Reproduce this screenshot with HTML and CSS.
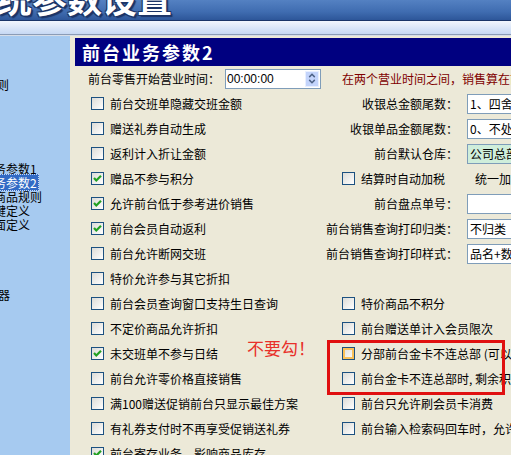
FILE: index.html
```html
<!DOCTYPE html>
<html>
<head>
    <meta charset="utf-8">
    <title>系统参数设置</title>
    <link rel="stylesheet" href="styles.css">
</head>
<body>
    <div class="titlebar"><span class="title-text">系统参数设置</span></div>
    <div class="toolbar"></div>

    <div class="main">
        <ul class="tree">
            <li></li><li></li><li></li>
            <li class="cut-more">则</li>
            <li></li><li></li><li></li><li></li><li></li>
            <li>务参数1</li>
            <li class="selected"><span>务参数2</span></li>
            <li>商品规则</li>
            <li>键定义</li>
            <li>面定义</li>
            <li></li><li></li><li></li><li></li>
            <li class="cut-less">器</li>
        </ul>

        <div class="panel">
            <div class="panel-head">前台业务参数2</div>

            <div class="form">
                <div class="time-row">
                    <span>前台零售开始营业时间：</span>
                    <div class="time-box">
                        <span>00:00:00</span>
                        <span class="spin">
                            <svg width="13" height="15" viewBox="0 0 13 15">
                                <polyline points="3.5,6 6.5,3 9.5,6" fill="none" stroke="#4d6185" stroke-width="1.6"/>
                                <polyline points="3.5,9 6.5,12 9.5,9" fill="none" stroke="#4d6185" stroke-width="1.6"/>
                            </svg>
                        </span>
                    </div>
                    <span class="hint">在两个营业时间之间，销售算在前一天</span>
                </div>

                <!-- row 1 -->
                <label class="check"><span class="cb"></span>前台交班单隐藏交班金额</label>
                <span class="field-label">收银总金额尾数：</span>
                <div class="combo">1、四舍五入</div>

                <!-- row 2 -->
                <label class="check"><span class="cb"></span>赠送礼券自动生成</label>
                <span class="field-label">收银单品金额尾数：</span>
                <div class="combo">0、不处理</div>

                <!-- row 3 -->
                <label class="check"><span class="cb"></span>返利计入折让金额</label>
                <span class="field-label">前台默认仓库：</span>
                <div class="combo green">公司总部</div>

                <!-- row 4 -->
                <label class="check"><span class="cb on"><svg width="11" height="11" viewBox="0 0 11 11"><polyline points="2,5 4.3,7.5 9,2.8" fill="none" stroke="#21a121" stroke-width="2.2"/></svg></span>赠品不参与积分</label>
                <label class="check sub"><span class="cb"></span>结算时自动加税</label>
                <span class="extra">统一加税率</span>

                <!-- row 5 -->
                <label class="check"><span class="cb on"><svg width="11" height="11" viewBox="0 0 11 11"><polyline points="2,5 4.3,7.5 9,2.8" fill="none" stroke="#21a121" stroke-width="2.2"/></svg></span>允许前台低于参考进价销售</label>
                <span class="field-label">前台盘点单号：</span>
                <div class="combo"></div>

                <!-- row 6 -->
                <label class="check"><span class="cb on"><svg width="11" height="11" viewBox="0 0 11 11"><polyline points="2,5 4.3,7.5 9,2.8" fill="none" stroke="#21a121" stroke-width="2.2"/></svg></span>前台会员自动返利</label>
                <span class="field-label">前台销售查询打印归类：</span>
                <div class="combo">不归类</div>

                <!-- row 7 -->
                <label class="check"><span class="cb"></span>前台允许断网交班</label>
                <span class="field-label">前台销售查询打印样式：</span>
                <div class="combo">品名+数量</div>

                <!-- row 8 -->
                <label class="check"><span class="cb"></span>特价允许参与其它折扣</label>
                <span class="wide"></span>

                <!-- row 9 -->
                <label class="check"><span class="cb"></span>前台会员查询窗口支持生日查询</label>
                <label class="check wide"><span class="cb"></span>特价商品不积分</label>

                <!-- row 10 -->
                <label class="check"><span class="cb"></span>不定价商品允许折扣</label>
                <label class="check wide"><span class="cb"></span>前台赠送单计入会员限次</label>

                <!-- row 11 -->
                <label class="check"><span class="cb on"><svg width="11" height="11" viewBox="0 0 11 11"><polyline points="2,5 4.3,7.5 9,2.8" fill="none" stroke="#21a121" stroke-width="2.2"/></svg></span>未交班单不参与日结</label>
                <label class="check wide"><span class="cb hot"></span>分部前台金卡不连总部 (可以使用金卡)</label>

                <!-- row 12 -->
                <label class="check"><span class="cb"></span>前台允许零价格直接销售</label>
                <label class="check wide"><span class="cb"></span>前台金卡不连总部时, 剩余积分</label>

                <!-- row 13 -->
                <label class="check"><span class="cb"></span>满100赠送促销前台只显示最佳方案</label>
                <label class="check wide"><span class="cb"></span>前台只允许刷会员卡消费</label>

                <!-- row 14 -->
                <label class="check"><span class="cb"></span>有礼券支付时不再享受促销送礼券</label>
                <label class="check wide"><span class="cb"></span>前台输入检索码回车时，允许</label>

                <!-- row 15 -->
                <label class="check"><span class="cb on"><svg width="11" height="11" viewBox="0 0 11 11"><polyline points="2,5 4.3,7.5 9,2.8" fill="none" stroke="#21a121" stroke-width="2.2"/></svg></span>前台寄存业务，影响商品库存</label>
                <span class="wide"></span>
            </div>

            <!-- annotation drawn over the form -->
            <div class="note">不要勾！</div>
            <div class="mark"></div>
        </div>
    </div>
</body>
</html>
```

FILE: styles.css
```css
html, body { margin: 0; padding: 0; }
body { width: 511px; height: 455px; overflow: hidden; font-family: "Noto Sans CJK SC", "Liberation Sans", sans-serif; font-size: 12px; color: #000; background: #ece9d8; }

.titlebar { height: 20px; overflow: hidden; background: linear-gradient(#5481c2, #3f6cb0 60%, #2d5699); border-bottom: 1px solid #1b3567; }
.title-text { display: block; margin: -20px 0 0 -38px; font-size: 35px; line-height: 35px; font-weight: bold; color: #fff; white-space: nowrap;
    text-shadow: 1px 1px 0 #1c3466, -1px -1px 0 #1c3466, 1px -1px 0 #1c3466, -1px 1px 0 #1c3466, 2px 2px 1px #1c3466; }
.toolbar { height: 13px; background: linear-gradient(#f2f6fd, #c6d8f3); border-bottom: 1px solid #8b9cb6; }

.main { display: flex; height: 420px; border-top: 1px solid #d6dde8; }
.tree { width: 70px; margin: 0; padding: 0; list-style: none; background: #a6caf0; overflow: hidden; flex-shrink: 0; }
.tree li { height: 14px; line-height: 14px; white-space: nowrap; text-indent: -6px; }
.tree li.cut-more { text-indent: -3px; }
.tree li.cut-less { text-indent: -2px; }
.tree .selected span { background: #316ac5; color: #fff; padding-right: 2px; outline: 1px dotted #c8d8f0; outline-offset: -1px; }

.panel { flex: 1; position: relative; overflow: hidden; }
.panel-head { margin: 2px 0 0 5px; height: 28px; line-height: 28px; padding-left: 7px; background: #000080; color: #fff; font-size: 18px; font-weight: bold; letter-spacing: 2px; white-space: nowrap; }

.form { display: grid; grid-template-columns: 234px 133px 200px; grid-auto-rows: 25px; padding-left: 21px; width: 567px; }
.time-row { grid-column: 1 / -1; display: flex; align-items: center; margin-left: -3px; white-space: nowrap; }
.time-box { display: flex; align-items: center; justify-content: space-between; width: 96px; height: 20px; box-sizing: border-box; margin-left: 5px; padding: 0 1px 0 1px; background: #fff; border: 1px solid #7f9db9; font-family: "Liberation Sans", sans-serif; font-size: 12px; }
.spin { display: flex; width: 14px; height: 16px; background: #c3d4fb; border: 1px solid #e8efff; box-sizing: border-box; align-items: center; justify-content: center; }
.hint { margin-left: 21px; color: #800000; }

.check { display: flex; align-items: center; gap: 6px; white-space: nowrap; }
.check.sub { padding-left: 17px; }
.wide { grid-column: 2 / 4; padding-left: 17px; }
.cb { display: flex; align-items: center; justify-content: center; width: 13px; height: 13px; box-sizing: border-box; flex-shrink: 0; border: 1px solid #1c5180; background: linear-gradient(135deg, #dcdcd7, #fff); }
.cb.hot { box-shadow: inset 0 0 0 2px #f9c15a; }

.field-label { align-self: center; text-align: right; white-space: nowrap; }
.combo { align-self: center; margin-left: 9px; height: 20px; line-height: 18px; box-sizing: border-box; padding-left: 2px; background: #fff; border: 1px solid #7f9db9; white-space: nowrap; }
.combo.green { background: #cfeedb; }
.extra { align-self: center; padding-left: 17px; white-space: nowrap; }

.note { position: absolute; left: 177px; top: 299px; color: #e8302a; font-size: 17px; white-space: nowrap; }
.mark { position: absolute; left: 257px; top: 304px; width: 178px; height: 55px; box-sizing: border-box; border: 3px solid #e01010; }
```
